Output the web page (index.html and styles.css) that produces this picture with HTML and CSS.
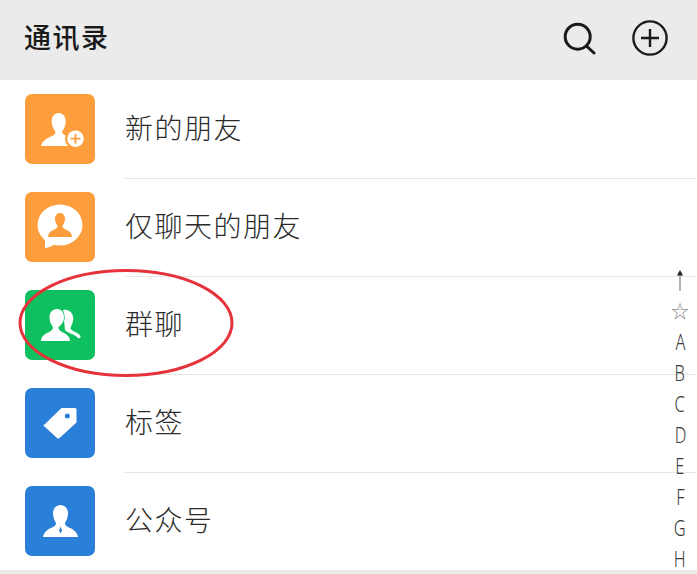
FILE: index.html
```html
<!DOCTYPE html>
<html lang="zh-CN">
<head>
    <meta charset="UTF-8">
    <meta name="viewport" content="width=device-width, initial-scale=1.0">
    <title>通讯录</title>
    <link rel="stylesheet" href="styles.css">
</head>
<body>
    <div class="screen">
        <header class="topbar">
            <h1 class="topbar-title">通讯录</h1>
            <div class="topbar-actions">
                <svg class="icon-search" viewBox="0 0 34 34" fill="none" stroke="#1a1a1a" stroke-width="3" stroke-linecap="round">
                    <circle cx="15.7" cy="15.7" r="12.5"/>
                    <path d="M25 25.5L32 32"/>
                </svg>
                <svg class="icon-add" viewBox="0 0 38 38" fill="none" stroke="#1a1a1a" stroke-width="2.4">
                    <circle cx="19" cy="19" r="16.6"/>
                    <path d="M10 19H28M19 10V28"/>
                </svg>
            </div>
        </header>

        <ul class="contact-list">
            <li class="contact-row">
                <svg class="row-icon" viewBox="0 0 70 70">
                    <rect width="70" height="70" rx="7" fill="#fe9d3c"/>
                    <path fill="#fff" d="M33.7 19C29 19 26.7 23 26.7 27.500C26.700 32 29 35.500 30.300 37.500C30.500 40 29.500 41 26 42.500C21 44.700 17 47.500 16 52H50V43C42 42.500 37.500 41 37 37.500C38.500 35.500 40.700 32 40.700 27.500C40.700 23 38.300 19 33.700 19Z"/>
                    <circle cx="50.500" cy="44.700" r="10.500" fill="#fe9d3c"/>
                    <circle cx="50.500" cy="44.700" r="8.300" fill="#fff"/>
                    <path d="M45.500 44.700H55.500M50.500 39.700V49.700" stroke="#fe9d3c" stroke-width="1.800"/>
                </svg>
                <span class="row-label">新的朋友</span>
            </li>
            <li class="contact-row">
                <svg class="row-icon" viewBox="0 0 70 70">
                    <rect width="70" height="70" rx="7" fill="#fe9d3c"/>
                    <ellipse cx="35" cy="33" rx="22.500" ry="20.500" fill="#fff"/>
                    <path fill="#fff" d="M20 47V56C24 55.500 28 54 31 51Z"/>
                    <path fill="#fe9d3c" d="M35 21C31.500 21 30 24 30 27C30 30 31.300 32 32.500 33.800C32.500 36 31 37 28 38.300C25 39.500 23.300 41.500 23 45H47C46.700 41.500 45 39.500 42 38.300C39 37 37.500 36 37.500 33.800C38.700 32 40 30 40 27C40 24 38.500 21 35 21Z"/>
                </svg>
                <span class="row-label">仅聊天的朋友</span>
            </li>
            <li class="contact-row">
                <svg class="row-icon" viewBox="0 0 70 70">
                    <rect width="70" height="70" rx="7" fill="#0ec060"/>
                    <path fill="#fff" d="M38 20C45 18.500 49.500 25 48 31C47.500 34.500 45.500 36.500 45.500 38.500C47 41.500 53 42 55.500 46C56 47.500 54.500 49 53 48C50 44 42 43 40 40Z"/>
                    <path fill="#fff" stroke="#0ec060" stroke-width="1.500" paint-order="stroke" d="M32 19C27 19 24.500 23 24.500 27.500C24.500 32 26.500 35 28 37C28 40 26 41 23 42.500C19 44.500 16 47 16 51H45C45 47 42 44.500 38 42.500C35 41 33.500 40 33.500 37C36 35 39 32 39 27.500C39 23 37 19 32 19Z"/>
                </svg>
                <span class="row-label">群聊</span>
            </li>
            <li class="contact-row">
                <svg class="row-icon" viewBox="0 0 70 70">
                    <rect width="70" height="70" rx="7" fill="#2a80d8"/>
                    <path fill="#fff" d="M36.500 20H50A1.500 1.500 0 0 1 51.500 21.500V34.500L34.500 50A2 2 0 0 1 32 50L19.500 38.500A1 1 0 0 1 19.500 36.500Z"/>
                    <circle cx="42.300" cy="28" r="2.500" fill="#2a80d8"/>
                </svg>
                <span class="row-label">标签</span>
            </li>
            <li class="contact-row">
                <svg class="row-icon" viewBox="0 0 70 70">
                    <rect width="70" height="70" rx="7" fill="#2a80d8"/>
                    <path fill="#fff" d="M35.500 19C30.500 19 28 23 28 27.500C28 32 30 35 31 37C31 39.500 29 40.500 26 42C22.500 43.500 19 46 18 51H53C52 46 48.500 43.500 45 42C42 40.500 40 39.500 40 37C41 35 43 32 43 27.500C43 23 40.500 19 35.500 19Z"/>
                    <path fill="#2a80d8" d="M35.500 40.500L37 44.500L35.500 47.500L34 44.500Z"/>
                </svg>
                <span class="row-label">公众号</span>
            </li>
        </ul>

        <!-- letters down the right side -->
        <div class="index-bar">
            <span class="index-item">
                <svg class="index-arrow" viewBox="0 0 8 21" fill="none">
                    <path d="M4 4V21" stroke="#8a8a8a" stroke-width="1.300"/>
                    <path d="M4 0L7 5.500H1Z" fill="#222"/>
                </svg>
            </span>
            <span class="index-item index-star">☆</span>
            <span class="index-item"><span class="index-letter">A</span></span>
            <span class="index-item"><span class="index-letter">B</span></span>
            <span class="index-item"><span class="index-letter">C</span></span>
            <span class="index-item"><span class="index-letter">D</span></span>
            <span class="index-item"><span class="index-letter">E</span></span>
            <span class="index-item"><span class="index-letter">F</span></span>
            <span class="index-item"><span class="index-letter">G</span></span>
            <span class="index-item"><span class="index-letter">H</span></span>
        </div>

        <!-- red circle drawn over the screenshot -->
        <svg class="highlight-ring" viewBox="0 0 216 110" fill="none">
            <ellipse cx="108" cy="55" rx="106" ry="52.500" stroke="#e5323b" stroke-width="3"/>
        </svg>
    </div>
</body>
</html>
```

FILE: styles.css
```css
* {
    box-sizing: border-box;
}

body {
    margin: 0;
    background-color: #ebebeb;
    font-family: "Noto Sans CJK SC", "Noto Sans", sans-serif;
    color: #2b2b2b;
}

.screen {
    position: relative;
    height: 574px;
    overflow: hidden;
}

.topbar {
    display: flex;
    justify-content: space-between;
    align-items: center;
    height: 80px;
    padding: 0 28px 5px 24px;
    background-color: #ebebeb;
}

.topbar-title {
    margin: 0 0 3px;
    font-size: 27px;
    font-weight: 500;
    letter-spacing: 1.500px;
    color: #1a1a1a;
}

.topbar-actions {
    display: flex;
    align-items: center;
    gap: 35px;
}

.icon-search {
    width: 34px;
    height: 34px;
}

.icon-add {
    width: 38px;
    height: 38px;
}

.contact-list {
    margin: 0;
    padding: 0;
    list-style: none;
    background-color: #fff;
}

.contact-row {
    position: relative;
    display: flex;
    align-items: center;
    gap: 30px;
    height: 98px;
    padding-left: 25px;
}

/* the divider starts at the label, not under the icon */
.contact-row:not(:last-child)::after {
    content: "";
    position: absolute;
    left: 124px;
    right: 0;
    bottom: -1px;
    height: 1px;
    background-color: #e6e6e6;
}

.row-icon {
    flex-shrink: 0;
    width: 70px;
    height: 70px;
}

.row-label {
    margin-bottom: 4px;
    font-size: 28px;
    font-weight: 300;
    letter-spacing: 1.500px;
    line-height: 1;
}

.index-bar {
    position: absolute;
    top: 265px;
    right: 7px;
    display: flex;
    flex-direction: column;
    align-items: center;
    width: 20px;
    font-family: "Noto Sans", sans-serif;
    font-size: 21px;
    font-weight: 300;
    color: #3a3a3a;
}

.index-item {
    display: flex;
    justify-content: center;
    align-items: center;
    height: 31px;
    line-height: 31px;
}

.index-letter {
    display: inline-block;
    transform: scaleX(0.78);
}

.index-arrow {
    width: 8px;
    height: 21px;
}

.index-star {
    font-family: "DejaVu Sans", sans-serif;
    font-size: 18px;
    color: #8c8c8c;
}

.highlight-ring {
    position: absolute;
    left: 18px;
    top: 268px;
    width: 216px;
    height: 110px;
}
```
